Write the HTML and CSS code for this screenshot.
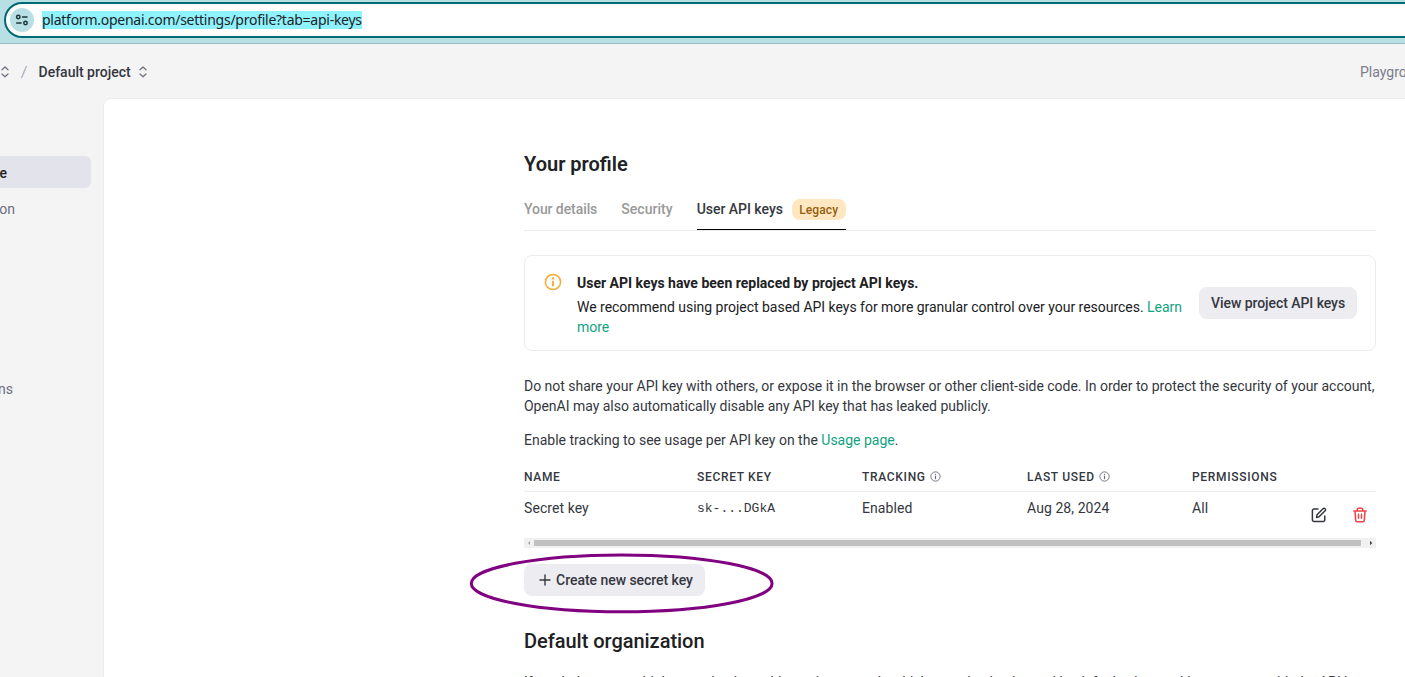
FILE: index.html
```html
<!DOCTYPE html>
<html lang="en">
<head>
<meta charset="utf-8">
<title>Your profile</title>
<link rel="stylesheet" href="styles.css">
</head>
<body>
<svg class="defs" width="0" height="0">
  <symbol id="info" viewBox="0 0 18 18">
    <circle cx="9" cy="9" r="7.6" fill="none" stroke="currentColor" stroke-width="1.5"/>
    <path d="M9 8.4v4.2" stroke="currentColor" stroke-width="1.9" stroke-linecap="round"/>
    <circle cx="9" cy="5.5" r="1.15" fill="currentColor"/>
  </symbol>
  <symbol id="sort" viewBox="0 0 10 14">
    <path d="M2 4.8l3-2.8 3 2.8M2 9l3 2.8 3-2.8" fill="none" stroke="currentColor" stroke-width="1.2" stroke-linecap="round" stroke-linejoin="round"/>
  </symbol>
</svg>
<header class="browser-bar">
  <div class="address">
    <span class="site-info">
      <svg width="14" height="14" viewBox="0 0 14 14" fill="none" stroke="#1c3337" stroke-width="1.5">
        <circle cx="3.3" cy="4" r="1.7"/><path d="M7 4h5.5M1.2 10h5.5"/><circle cx="10.5" cy="10" r="1.7"/>
      </svg>
    </span>
    <span class="url">platform.openai.com/settings/profile?tab=api-keys</span>
  </div>
</header>
<div class="topbar">
  <svg class="sort" width="10" height="14"><use href="#sort"/></svg>
  <svg class="slash" width="8" height="16"><path d="M6.5 2L1.5 14" stroke="#acacbe" stroke-width="1.2"/></svg>
  <span class="project">Default project</span>
  <svg class="sort" width="10" height="14"><use href="#sort"/></svg>
  <span class="nav-link">Playground</span>
</div>
<div class="app">
  <nav class="sidebar">
    <a class="side-item active"><span>Your profile</span></a>
    <a class="side-item organization"><span>Organization</span></a>
    <a class="side-item limits"><span>Integrations</span></a>
  </nav>
  <main class="panel">
    <div class="content">
      <h1 class="title">Your profile</h1>
      <div class="tabs">
        <a class="tab t-details">Your details</a>
        <a class="tab t-security">Security</a>
        <a class="tab current"><span class="t-keys">User API keys</span><span class="badge">Legacy</span></a>
      </div>
      <section class="notice">
        <svg class="notice-icon" width="18" height="18"><use href="#info"/></svg>
        <div class="notice-body">
          <div class="notice-title">User API keys have been replaced by project API keys.</div>
          <div class="notice-text">We recommend using project based API keys for more granular control over your resources. <a class="link">Learn<br>more</a></div>
        </div>
        <button class="btn view-btn">View project API keys</button>
      </section>
      <p class="para"><span class="p-line1">Do not share your API key with others, or expose it in the browser or other client-side code. In order to protect the security of your account,</span><br><span class="p-line2">OpenAI may also automatically disable any API key that has leaked publicly.</span></p>
      <p class="para tracking">Enable tracking to see usage per API key on the <a class="link">Usage page</a>.</p>
      <div class="table">
        <div class="row head">
          <span>NAME</span><span>SECRET KEY</span>
          <span>TRACKING<svg class="mini" width="11" height="11"><use href="#info"/></svg></span>
          <span>LAST USED<svg class="mini" width="11" height="11"><use href="#info"/></svg></span>
          <span>PERMISSIONS</span><span></span>
        </div>
        <div class="row data">
          <span>Secret key</span><span class="mono">sk-...DGkA</span><span>Enabled</span><span>Aug 28, 2024</span><span>All</span>
          <span class="actions">
            <svg width="16" height="16" viewBox="0 0 16 16" fill="none" stroke="#353740" stroke-width="1.5" stroke-linecap="round" stroke-linejoin="round"><path d="M7 2H3a1.6 1.6 0 0 0-1.6 1.6v9.2A1.6 1.6 0 0 0 3 14.4h9.2a1.6 1.6 0 0 0 1.6-1.6V9"/><path d="M5.6 10.4l.4-2.7 6-6a1.45 1.45 0 0 1 2.1 2.1l-6 6z"/></svg>
            <svg width="16" height="16" viewBox="0 0 16 16" fill="none" stroke="#ef4146" stroke-width="1.5" stroke-linecap="round" stroke-linejoin="round"><path d="M1.8 4h12.4M5.3 3.8V2.4a1.2 1.2 0 0 1 1.2-1.2h3a1.2 1.2 0 0 1 1.2 1.2v1.4M3 4.2l.7 9.2a1.4 1.4 0 0 0 1.4 1.3h5.8a1.4 1.4 0 0 0 1.4-1.3l.7-9.2M6.5 7.3v4M9.5 7.3v4"/></svg>
          </span>
        </div>
        <div class="scrollbar">
          <svg width="10" height="10"><path d="M6 3v4L4 5z" fill="#a3a3a3"/></svg>
          <span class="thumb"></span>
          <svg width="10" height="10"><path d="M4 2.8v4.4L6.2 5z" fill="#404040"/></svg>
        </div>
      </div>
      <div class="create">
        <button class="btn create-btn"><svg width="12" height="12"><path d="M6 1v10M1 6h10" stroke="#353740" stroke-width="1.4" stroke-linecap="round"/></svg><span>Create new secret key</span></button>
        <svg class="ring" width="306" height="62"><ellipse cx="152.7" cy="31.4" rx="150.4" ry="28.4" fill="none" stroke="#800080" stroke-width="3"/></svg>
      </div>
      <h2 class="subtitle">Default organization</h2>
      <p class="para last">If you belong to multiple organizations, this setting controls which organization is used by default when making requests with the API keys</p>
    </div>
  </main>
</div>
</body>
</html>
```
FILE: styles.css
```css
* { box-sizing: border-box; }
body { margin: 0; width: 1405px; height: 677px; overflow: hidden; display: flex; flex-direction: column; background: #f4f4f4; color: #353740; font: 14px/20px Roboto, "Liberation Sans", sans-serif; }
.defs { position: absolute; }
h1, h2, p { margin: 0; }
.browser-bar { flex: none; height: 44px; padding: 2px 0 5px 4px; background: #b8e0e4; border-bottom: 1px solid #9bbcbf; overflow: hidden; }
.address { width: 1440px; height: 36px; border: 2px solid #006a73; border-radius: 18px; background: #fff; display: flex; align-items: center; padding-left: 4px; }
.site-info { width: 24px; height: 24px; border-radius: 50%; background: #b8e0e4; display: grid; place-items: center; margin-right: 8px; }
.url { font: 14px/18px "Noto Sans", sans-serif; color: #222; background: #8ef3ff; height: 18px; letter-spacing: -.26px; white-space: nowrap; }
.topbar { flex: none; height: 54px; display: flex; align-items: center; padding-top: 2px; }
.sort { color: #6e6e80; }
.slash { margin: 0 10.5px 0 10px; }
.project { font-weight: 500; margin-right: 7px; color: #353740; }
.nav-link { margin-left: auto; width: 45px; white-space: nowrap; color: #7c7c8d; }
.app { flex: 1; display: flex; min-height: 0; }
.sidebar { width: 91px; margin-right: 12px; flex: none; padding-top: 58px; }
.side-item { height: 32px; display: flex; align-items: center; justify-content: flex-end; padding-right: 76px; margin-bottom: 4px; color: #6e6e80; white-space: nowrap; }
.side-item span { flex: none; }
.active { background: #e3e3eb; border-radius: 0 6px 6px 0; color: #202123; font-weight: 500; padding-right: 84px; padding-top: 2px; }
.organization { margin-bottom: 148px; padding-top: 2px; }
.limits { padding-right: 78px; padding-top: 2px; }
.panel { flex: 1; background: #fff; border: 1px solid #ececec; border-right: 0; border-bottom: 0; border-radius: 8px 0 0 0; padding: 51px 0 0 420px; overflow: hidden; }
.content { width: 852px; }
.title { font-size: 20px; line-height: 28px; font-weight: 600; color: #202123; }
.tabs { display: flex; height: 53px; gap: 24px; border-bottom: 1px solid #ececec; color: #999; font-weight: 500; }
.tab { padding-top: 21px; }
.t-details { letter-spacing: -.08px; }
.t-security { letter-spacing: .04px; }
.current { color: #353740; display: flex; align-items: flex-start; border-bottom: 1px solid #000; width: 149px; height: 52px; }
.t-keys { letter-spacing: -.03px; }
.badge { margin-left: auto; height: 21px; width: 54px; text-align: center; border-radius: 8px; background: #ffe7c2; color: #945f0c; font-size: 12px; line-height: 22px; letter-spacing: .1px; }
.notice { margin-top: 24px; height: 96px; border: 1px solid #ececec; border-radius: 8px; display: flex; padding: 17px 18px 0 19px; color: #202123; }
.notice-icon { color: #f4ac36; flex: none; margin-right: 15px; }
.notice-body { width: 622px; flex: none; white-space: nowrap; }
.notice-title { font-weight: 700; margin-bottom: 4px; }
.notice-text { letter-spacing: -.02px; }
.link { color: #10a37f; }
.btn { border: 0; border-radius: 8px; height: 32px; background: #ececf1; color: #353740; font: 500 14px/20px Roboto, sans-serif; white-space: nowrap; padding: 0; display: flex; align-items: center; justify-content: center; }
.view-btn { width: 158px; margin-top: 14px; letter-spacing: -.06px; }
.para { margin-top: 25px; white-space: nowrap; letter-spacing: -.02px; }
.tracking { margin-top: 14px; letter-spacing: 0; }
.table { margin-top: 17px; }
.row { display: grid; grid-template-columns: 173px 165px 165px 165px 118.5px 65.5px; }
.head { height: 25px; padding-top: 1px; font-size: 12px; line-height: 19px; font-weight: 500; letter-spacing: .68px; border-bottom: 1px solid #ececec; }
.mini { color: #6e6e80; margin-left: 4px; vertical-align: -1px; }
.data { height: 46px; padding-top: 6px; letter-spacing: .07px; }
.mono { font: 13px/20px "Liberation Mono", monospace; padding-top: 1px; letter-spacing: 0; }
.actions { display: flex; gap: 25.5px; padding-top: 9px; }
.scrollbar { height: 10px; display: flex; align-items: center; background: #f1f1f1; }
.thumb { width: 827px; height: 6px; margin-right: 5px; background: #c1c1c1; }
.create { position: relative; margin-top: 16px; }
.create-btn { width: 181px; gap: 5px; padding-left: 3px; letter-spacing: -.04px; }
.ring { position: absolute; left: -55px; top: -12px; }
.subtitle { margin-top: 31px; font-size: 20px; line-height: 28px; font-weight: 500; color: #202123; letter-spacing: -.03px; }
.last { margin-top: 17px; letter-spacing: -.05px; }
```
